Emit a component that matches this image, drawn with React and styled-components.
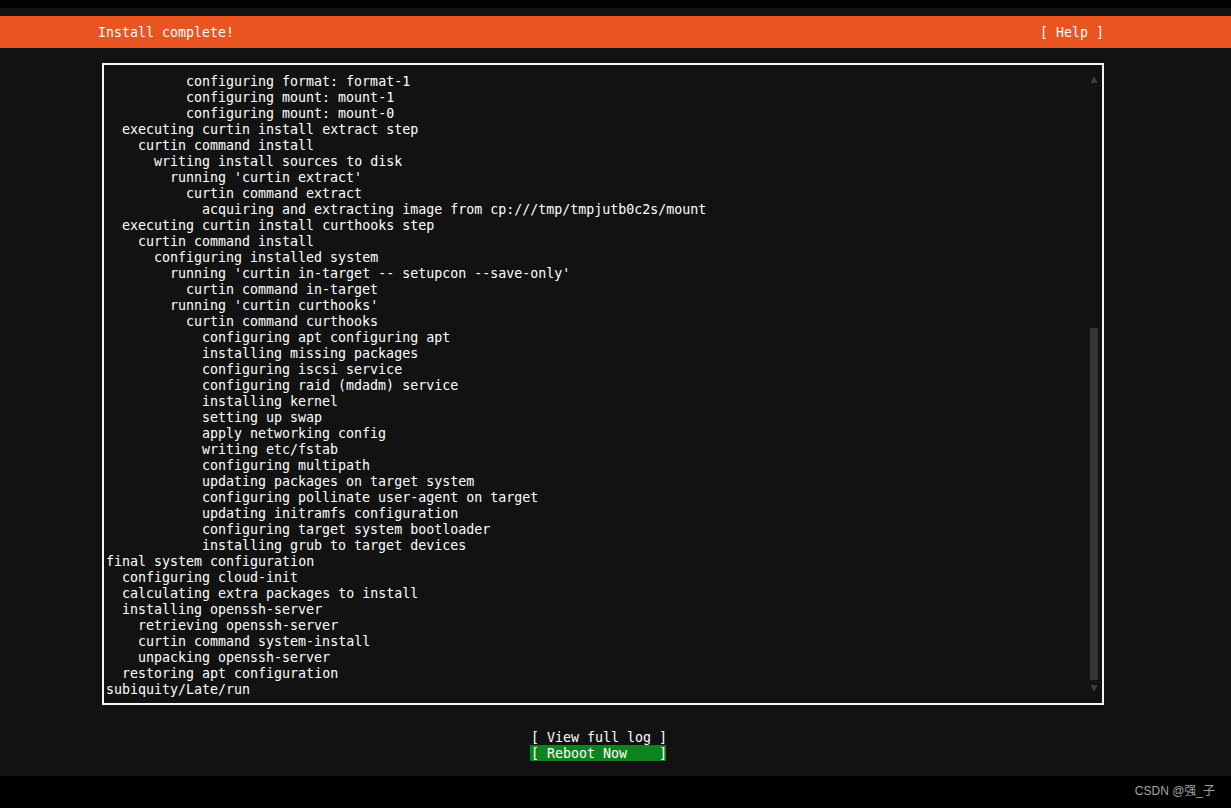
import React from "react";
import styled, { createGlobalStyle } from "styled-components";

const GlobalStyle = createGlobalStyle`
  html, body {
    margin: 0;
    padding: 0;
    background: #121212;
  }
  body {
    width: 1231px;
    height: 808px;
    overflow: hidden;
  }
`;

const Screen = styled.div`
  display: flex;
  flex-direction: column;
  width: 1231px;
  height: 808px;
  background: #121212;
  color: #fff;
  font-family: "DejaVu Sans Mono", "Liberation Mono", monospace;
  font-size: 13.3px;
  line-height: 16px;
`;

const TopStrip = styled.div`
  height: 8px;
  background: #030303;
`;

const Terminal = styled.div`
  flex: 1;
  display: flex;
  flex-direction: column;
  padding-top: 8px;
`;

const HeadBar = styled.div`
  height: 32px;
  background: #e95420;
`;

const HeadInner = styled.div`
  width: 1200px;
  height: 32px;
  box-sizing: border-box;
  padding: 2px 96px 0 98px;
  display: flex;
  justify-content: space-between;
  align-items: center;
  white-space: pre;
`;

const Body = styled.div`
  width: 1200px;
  box-sizing: border-box;
  padding: 15px 96px 0 102px;
  display: flex;
  flex-direction: column;
`;

const LogBox = styled.div`
  width: 1002px;
  height: 642px;
  box-sizing: border-box;
  border: 2px solid #f4f4f4;
  display: flex;
`;

const LogLines = styled.div`
  flex: 1;
  padding: 9px 0 5px 2px;
`;

const Line = styled.div`
  height: 16px;
  white-space: pre;
  padding-left: ${(p) => p.$level * 8}px;
`;

const ScrollCol = styled.div`
  width: 8px;
  margin-right: 4px;
  padding: 7px 0;
  display: flex;
  flex-direction: column;
`;

const ArrowCell = styled.div`
  height: 16px;
  display: flex;
  align-items: center;
  justify-content: center;
`;

const Track = styled.div`
  flex: 1;
  display: flex;
  flex-direction: column;
  justify-content: flex-end;
`;

const Thumb = styled.div`
  background: #353535;
`;

const Actions = styled.div`
  display: flex;
  flex-direction: column;
  align-items: center;
  margin-top: 24px;
  margin-right: 10px;
`;

const Button = styled.div`
  width: 136px;
  height: 16px;
  box-sizing: border-box;
  padding: 1px 0 0 1px;
  white-space: pre;
  background: ${(p) => (p.$focused ? "#0e8420" : "transparent")};
`;

const Footer = styled.div`
  height: 32px;
  background: #000;
  display: flex;
  justify-content: flex-end;
  align-items: center;
  padding-right: 16px;
`;

const Watermark = styled.span`
  font-family: "Liberation Sans", Arial, "Noto Sans CJK SC", sans-serif;
  font-size: 12px;
  color: #a3a3a3;
  margin-top: -2px;
`;

const lines = [
  [10, "configuring format: format-1"],
  [10, "configuring mount: mount-1"],
  [10, "configuring mount: mount-0"],
  [2, "executing curtin install extract step"],
  [4, "curtin command install"],
  [6, "writing install sources to disk"],
  [8, "running 'curtin extract'"],
  [10, "curtin command extract"],
  [12, "acquiring and extracting image from cp:///tmp/tmpjutb0c2s/mount"],
  [2, "executing curtin install curthooks step"],
  [4, "curtin command install"],
  [6, "configuring installed system"],
  [8, "running 'curtin in-target -- setupcon --save-only'"],
  [10, "curtin command in-target"],
  [8, "running 'curtin curthooks'"],
  [10, "curtin command curthooks"],
  [12, "configuring apt configuring apt"],
  [12, "installing missing packages"],
  [12, "configuring iscsi service"],
  [12, "configuring raid (mdadm) service"],
  [12, "installing kernel"],
  [12, "setting up swap"],
  [12, "apply networking config"],
  [12, "writing etc/fstab"],
  [12, "configuring multipath"],
  [12, "updating packages on target system"],
  [12, "configuring pollinate user-agent on target"],
  [12, "updating initramfs configuration"],
  [12, "configuring target system bootloader"],
  [12, "installing grub to target devices"],
  [0, "final system configuration"],
  [2, "configuring cloud-init"],
  [2, "calculating extra packages to install"],
  [2, "installing openssh-server"],
  [4, "retrieving openssh-server"],
  [4, "curtin command system-install"],
  [4, "unpacking openssh-server"],
  [2, "restoring apt configuration"],
  [0, "subiquity/Late/run"],
];

function Arrow({ down }) {
  return (
    <svg width="6" height="6" viewBox="0 0 6 6">
      <path
        d={
          down
            ? "M0 0H6V2H5V4H4V6H2V4H1V2H0Z"
            : "M2 0H4V2H5V4H6V6H0V4H1V2H2Z"
        }
        fill="#3c3c3c"
      />
    </svg>
  );
}

export default function App() {
  return (
    <>
      <GlobalStyle />
      <Screen>
        <TopStrip />
        <Terminal>
          <HeadBar>
            <HeadInner>
              <span>Install complete!</span>
              <span>[ Help ]</span>
            </HeadInner>
          </HeadBar>
          <Body>
            <LogBox>
              <LogLines>
                {lines.map(([level, text], i) => (
                  <Line key={i} $level={level}>
                    {text}
                  </Line>
                ))}
              </LogLines>
              <ScrollCol>
                <ArrowCell>
                  <Arrow />
                </ArrowCell>
                <Track>
                  <Thumb style={{ height: `${(352 / 592) * 100}%` }} />
                </Track>
                <ArrowCell>
                  <Arrow down />
                </ArrowCell>
              </ScrollCol>
            </LogBox>
            <Actions>
              <Button>[ View full log ]</Button>
              <Button $focused>[ Reboot Now    ]</Button>
            </Actions>
          </Body>
        </Terminal>
        <Footer>
          <Watermark>CSDN @强_子</Watermark>
        </Footer>
      </Screen>
    </>
  );
}
